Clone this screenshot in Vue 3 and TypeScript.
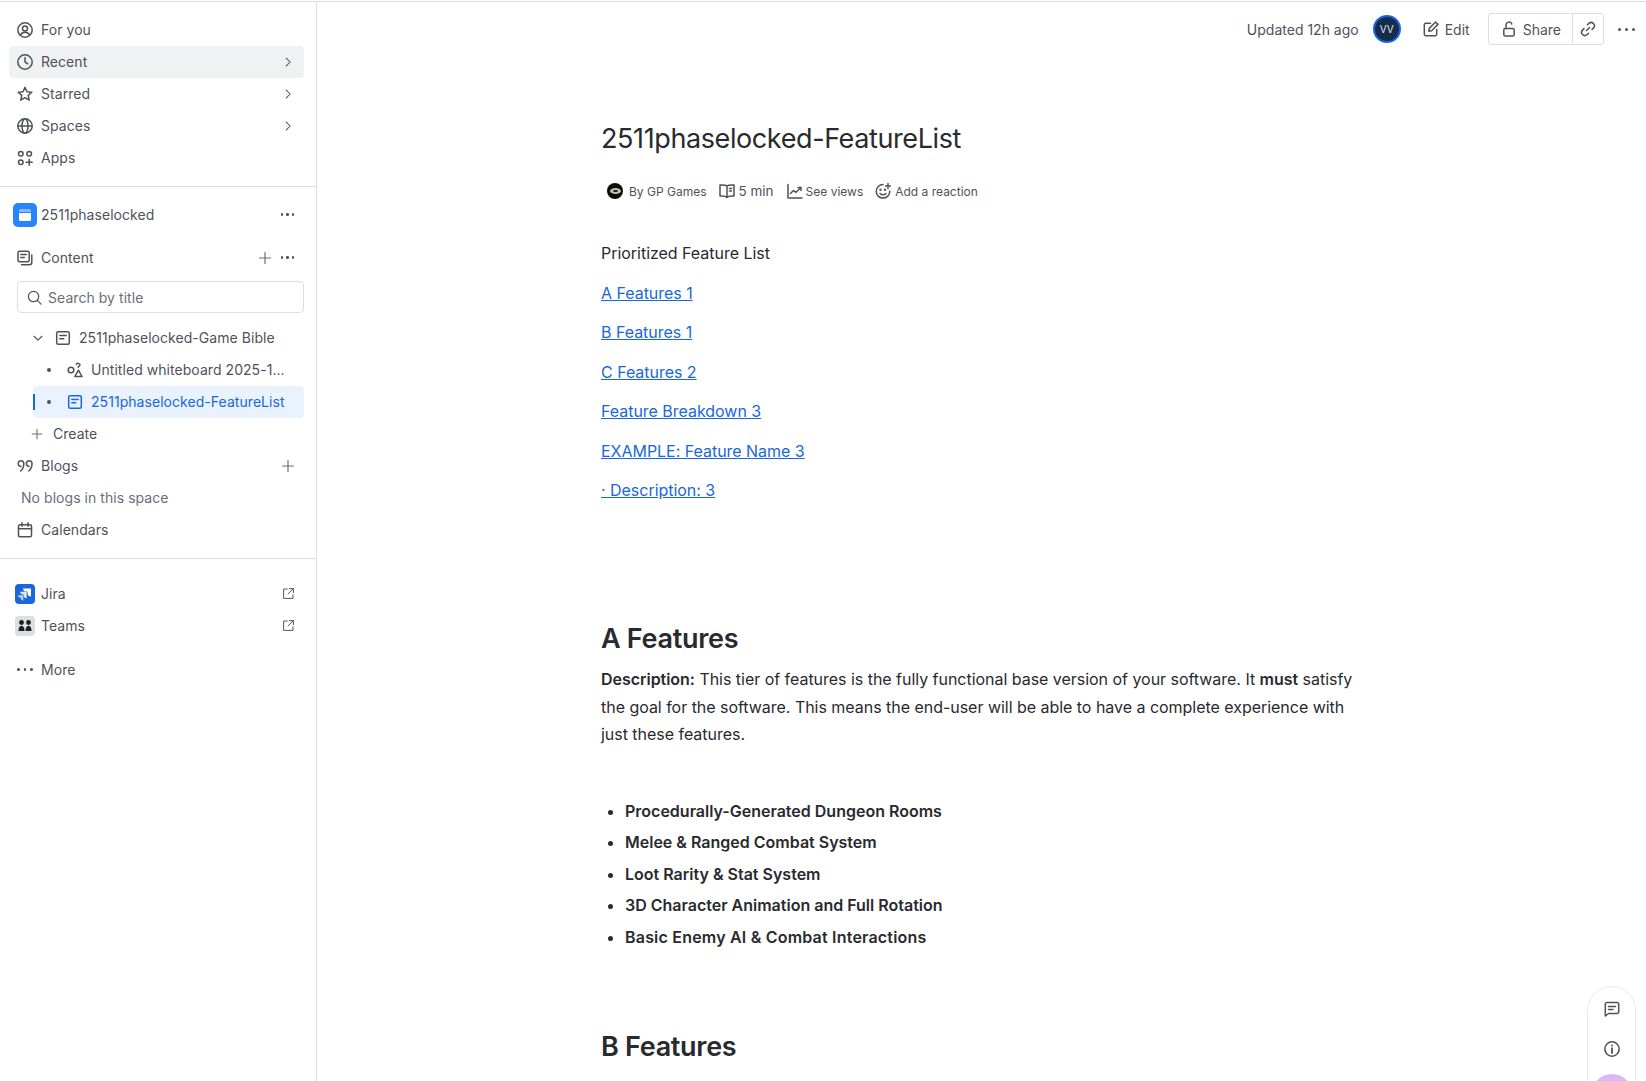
<script setup lang="ts">
const links = [
  "A Features 1",
  "B Features 1",
  "C Features 2",
  "Feature Breakdown 3",
  "EXAMPLE: Feature Name 3",
  "· Description: 3",
];

const features = [
  "Procedurally-Generated Dungeon Rooms",
  "Melee & Ranged Combat System",
  "Loot Rarity & Stat System",
  "3D Character Animation and Full Rotation",
  "Basic Enemy AI & Combat Interactions",
];
</script>

<template>
  <div class="page">
    <aside class="sidebar">
      <nav class="section top-nav">
        <a class="row">
          <svg class="ico" viewBox="0 0 16 16"><circle cx="8" cy="8" r="7.2" /><circle cx="8" cy="6.4" r="2.5" /><path d="M3.4 13.2c.8-2 2.5-3 4.6-3s3.800 1 4.600 3" /></svg>
          <span>For you</span>
        </a>
        <a class="row hovered">
          <svg class="ico" viewBox="0 0 16 16"><circle cx="8" cy="8" r="7.2" /><path d="M8 3.800V8l2.800 1.800" /></svg>
          <span>Recent</span>
          <svg class="chev" viewBox="0 0 16 16"><path d="M6 3.500 10.500 8 6 12.500" /></svg>
        </a>
        <a class="row">
          <svg class="ico" viewBox="0 0 16 16"><path d="M8 1.300 10 5.700l4.800.5-3.600 3.200 1 4.700L8 11.700l-4.200 2.400 1-4.700-3.600-3.200 4.800-.5z" /></svg>
          <span>Starred</span>
          <svg class="chev" viewBox="0 0 16 16"><path d="M6 3.500 10.500 8 6 12.500" /></svg>
        </a>
        <a class="row">
          <svg class="ico" viewBox="0 0 16 16"><circle cx="8" cy="8" r="7.200" /><ellipse cx="8" cy="8" rx="3" ry="7.200" /><path d="M1 8h14" /></svg>
          <span>Spaces</span>
          <svg class="chev" viewBox="0 0 16 16"><path d="M6 3.500 10.500 8 6 12.500" /></svg>
        </a>
        <a class="row">
          <svg class="ico" viewBox="0 0 16 16"><circle cx="3.800" cy="3.800" r="2.300" /><circle cx="12.200" cy="3.800" r="2.300" /><circle cx="3.800" cy="12.200" r="2.300" /><path d="M12.200 9.200v6M9.200 12.200h6" /></svg>
          <span>Apps</span>
        </a>
      </nav>

      <div class="section space-nav">
        <a class="row space-row">
          <span class="space-logo">
            <svg viewBox="0 0 24 24"><path d="M6 7.500A1.500 1.500 0 0 1 7.500 6h9A1.500 1.500 0 0 1 18 7.500V9H6z" fill="#fff" opacity=".45" /><path d="M6 10h12v6.500a1.500 1.500 0 0 1-1.500 1.500h-9A1.500 1.500 0 0 1 6 16.500z" fill="#fff" /></svg>
          </span>
          <span>2511phaselocked</span>
          <span class="dots small"><i /><i /><i /></span>
        </a>

        <a class="row content-row">
          <svg class="ico" viewBox="0 0 16 16"><rect x="1" y="1.200" width="11.200" height="10.600" rx="1.500" /><path d="M3.800 4.500h5.600M3.800 7.500h3.500M14.800 5v7.300a2.500 2.500 0 0 1-2.500 2.500H4.500" /></svg>
          <span>Content</span>
          <svg class="plus right-gap" viewBox="0 0 16 16"><path d="M8 2.500v11M2.500 8h11" /></svg>
          <span class="dots small no-auto"><i /><i /><i /></span>
        </a>

        <div class="search">
          <svg class="search-ico" viewBox="0 0 16 16"><circle cx="7" cy="7" r="5.500" /><path d="m11 11 4 4" /></svg>
          <span>Search by title</span>
        </div>

        <a class="row tree-root">
          <svg class="chev-down" viewBox="0 0 16 16"><path d="M3.500 6 8 10.500 12.500 6" /></svg>
          <svg class="ico page-ico" viewBox="0 0 16 16"><rect x="1.700" y="1.700" width="12.600" height="12.600" rx="1.500" /><path d="M4.800 5.600h6.400M4.800 8.800h4" /></svg>
          <span>2511phaselocked-Game Bible</span>
        </a>
        <a class="row tree-child">
          <span class="bullet" />
          <svg class="ico page-ico" viewBox="0 0 16 16"><circle cx="4" cy="8" r="2.800" /><path d="M9.500 2.200c.4-1.200 3.500-1.200 3.500.6 0 1.200-1.800 1.500-1.800 2.500M11.400 8.200l3.600 6.300H7.800z" /></svg>
          <span class="ellipsis">Untitled whiteboard 2025-1...</span>
        </a>
        <a class="row tree-child selected">
          <span class="marker" />
          <span class="bullet" />
          <svg class="ico page-ico" viewBox="0 0 16 16"><rect x="1.700" y="1.700" width="12.600" height="12.600" rx="1.500" /><path d="M4.800 5.600h6.400M4.800 8.800h4" /></svg>
          <span>2511phaselocked-FeatureList</span>
        </a>
        <a class="row create-row">
          <svg class="plus" viewBox="0 0 16 16"><path d="M8 2.500v11M2.500 8h11" /></svg>
          <span>Create</span>
        </a>

        <a class="row">
          <svg class="ico" viewBox="0 0 16 16"><path d="M4 8.400a2.800 2.800 0 1 1 2.800-2.800c0 3.200-.8 5.600-3.200 7.400M12.200 8.400A2.800 2.800 0 1 1 15 5.600c0 3.200-.8 5.600-3.200 7.400" /></svg>
          <span>Blogs</span>
          <svg class="plus" viewBox="0 0 16 16"><path d="M8 2.500v11M2.500 8h11" /></svg>
        </a>
        <div class="row no-blogs">No blogs in this space</div>
        <a class="row">
          <svg class="ico" viewBox="0 0 16 16"><rect x="1.500" y="2.800" width="13" height="12" rx="1.500" /><path d="M1.500 6.800h13M5 .8v3.500M11 .8v3.500" /></svg>
          <span>Calendars</span>
        </a>
      </div>

      <div class="section app-nav">
        <a class="row">
          <span class="app-logo jira">
            <svg viewBox="0 0 20 20"><path d="M8 4.500h8v8c-2.200 0-3.400-1.200-3.500-3.300V7.500h-1.700C9.300 7.500 8.200 6.300 8 4.500z" fill="#fff" /><path d="M5.200 7.800h6.500v6.500c-1.800 0-2.900-1.100-3-2.900v-.9H7.800c-1.500 0-2.500-1-2.600-2.700z" fill="#fff" opacity=".85" /><path d="M3 11.200h5.300v5.300c-1.600-.1-2.500-1-2.600-2.500v-.4H5.400C4 13.600 3.100 12.700 3 11.200z" fill="#fff" opacity=".7" /></svg>
          </span>
          <span>Jira</span>
          <svg class="ext" viewBox="0 0 16 16"><path d="M6.500 2.500H2v11.500h11.500V9.500M9 2h5v5M14 2 7.500 8.500" /></svg>
        </a>
        <a class="row">
          <span class="app-logo teams">
            <svg viewBox="0 0 20 20" fill="#1e1f21"><circle cx="6.500" cy="6.500" r="2.400" /><circle cx="13.500" cy="6.500" r="2.400" /><path d="M3.500 15c0-3 1-5.200 3-5.200s3 2.200 3 5.200zM10.500 15c0-3 1-5.200 3-5.200s3 2.200 3 5.200z" /></svg>
          </span>
          <span>Teams</span>
          <svg class="ext" viewBox="0 0 16 16"><path d="M6.500 2.500H2v11.500h11.500V9.500M9 2h5v5M14 2 7.500 8.500" /></svg>
        </a>
        <a class="row more-row">
          <span class="dots wide"><i /><i /><i /></span>
          <span>More</span>
        </a>
      </div>
    </aside>

    <main class="main">
      <header class="topbar">
        <span class="updated">Updated 12h ago</span>
        <span class="avatar">VV</span>
        <a class="edit">
          <svg class="ico" viewBox="0 0 16 16"><path d="M7.500 2.300H2.800A1.500 1.500 0 0 0 1.300 3.800v9.400a1.500 1.500 0 0 0 1.500 1.500h9.400a1.500 1.500 0 0 0 1.500-1.500V8.500" /><path d="m5.800 10.200.5-2.800L12.600 1l2.400 2.400-6.400 6.300z" /></svg>
          <span>Edit</span>
        </a>
        <div class="share-group">
          <a class="share">
            <svg class="ico" viewBox="0 0 16 16"><rect x="2.800" y="7.500" width="10.400" height="7.500" rx="1.500" /><path d="M5 7.500V4a3 3 0 0 1 5.800-1" /></svg>
            <span>Share</span>
          </a>
          <a class="link-btn">
            <svg class="ico" viewBox="0 0 16 16"><path d="m6.500 9.500 3-3M7.500 3.800l1.300-1.300a3.200 3.200 0 0 1 4.600 4.600l-1.400 1.400M8.500 12.200l-1.300 1.300a3.200 3.200 0 0 1-4.600-4.600L4 7.500" /></svg>
          </a>
        </div>
        <span class="dots top-dots"><i /><i /><i /></span>
      </header>

      <article class="article">
        <h1>2511phaselocked-FeatureList</h1>

        <div class="byline">
          <span class="author-logo"><i /></span>
          <span class="by">By GP Games</span>
          <svg class="ico meta-ico book" viewBox="0 0 16 16"><path d="M8 3v11.500M8 3C7 2 5 1.800 1 2v11c4-.2 6 0 7 1.500 1-1.500 3-1.700 7-1.500V2c-4-.2-6 0-7 1z" /><path d="M10.500 5.500h2M10.500 8h2" /></svg>
          <span class="mins">5 min</span>
          <svg class="ico meta-ico views" viewBox="0 0 16 16"><path d="M1 1.500v13.500h14" /><path d="m3.500 10.500 3-3 2.500 1.800L14 4.500M11 4.500h3v3" /></svg>
          <span class="see">See views</span>
          <svg class="ico meta-ico react" viewBox="0 0 16 16"><path d="M8 1.500a6.800 6.800 0 1 0 6.800 6.800" /><path d="M5 10.500c1.500 1.800 4.500 1.800 6 0" /><circle cx="5.500" cy="6.800" r=".5" /><circle cx="10" cy="6.800" r=".5" /><path d="M13 .5v5M10.500 3h5" /></svg>
          <span>Add a reaction</span>
        </div>

        <p class="intro">Prioritized Feature List</p>
        <p v-for="item in links" :key="item" class="toc"><a>{{ item }}</a></p>

        <h2 class="first-heading">A Features</h2>
        <p class="desc"><strong>Description:</strong> This tier of features is the fully functional base version of your software. It <strong>must</strong> satisfy the goal for the software. This means the end-user will be able to have a complete experience with just these features.</p>
        <ul>
          <li v-for="item in features" :key="item">{{ item }}</li>
        </ul>

        <h2 class="second-heading">B Features</h2>
      </article>

      <div class="side-pill">
        <svg class="ico" viewBox="0 0 16 16"><path d="M2.800 1.500h10.400a1.500 1.500 0 0 1 1.500 1.500v8a1.500 1.500 0 0 1-1.500 1.500H4.500L1.300 15V3a1.500 1.500 0 0 1 1.500-1.500z" /><path d="M4.500 5.500h7M4.500 8.500h4.500" /></svg>
        <svg class="ico" viewBox="0 0 16 16"><circle cx="8" cy="8" r="7.200" /><path d="M8 7.200V12" stroke-width="1.800" /><circle cx="8" cy="4.500" r=".4" stroke-width="1.100" /></svg>
        <span class="pill-line" />
        <span class="pill-circle" />
      </div>
    </main>
  </div>
</template>

<style>
html,
body {
  margin: 0;
  height: 100%;
  overflow: hidden;
  background: #fff;
}
</style>

<style scoped>
.page {
  display: flex;
  height: 1080px;
  margin-top: 1px;
  overflow: hidden;
  box-sizing: border-box;
  border-top: 1px solid #dddee1;
  font-family: Inter, "Liberation Sans", sans-serif;
  color: #292a2e;
  font-size: 14px;
}

.sidebar {
  width: 317px;
  flex: none;
  box-sizing: border-box;
  border-right: 1px solid #dddee1;
  display: flex;
  flex-direction: column;
  color: #505258;
  letter-spacing: 0.05px;
}

.section {
  padding: 0 12px 0 9px;
  border-bottom: 1px solid #dddee1;
}

.top-nav {
  padding-top: 12px;
  padding-bottom: 12px;
}

.space-nav {
  padding-top: 11px;
  padding-bottom: 12px;
}

.app-nav {
  padding-top: 19px;
  border-bottom: none;
}

.row {
  display: flex;
  align-items: center;
  box-sizing: border-box;
  height: 32px;
  padding: 0 8px 1px;
  border-radius: 4px;
  position: relative;
  font-weight: 400;
  white-space: nowrap;
}

.hovered {
  background: #f0f1f2;
}

.ico {
  width: 16px;
  height: 16px;
  flex: none;
  fill: none;
  stroke: #505258;
  stroke-width: 1.500;
  stroke-linecap: round;
  stroke-linejoin: round;
}

.row > .ico {
  margin-right: 8px;
}

.chev,
.plus,
.ext {
  width: 16px;
  height: 16px;
  flex: none;
  fill: none;
  stroke: #6b6e76;
  stroke-width: 1.200;
  stroke-linecap: round;
  stroke-linejoin: round;
  margin-left: auto;
}

.ext {
  width: 13px;
  height: 13px;
  margin-right: 1.500px;
  stroke: #505258;
}

.chev {
  width: 14px;
  height: 14px;
  margin-right: 1px;
  stroke: #505258;
}

.dots {
  display: inline-flex;
  gap: 3px;
  margin-left: auto;
  margin-right: 2px;
}

.dots.no-auto {
  margin-left: 0;
}

.dots i {
  width: 2.500px;
  height: 2.500px;
  border-radius: 50%;
  background: #505258;
}

.dots.wide {
  gap: 4px;
  margin: 0 8px 0 0;
  width: 16px;
}

.dots.wide i {
  width: 3px;
  height: 3px;
}

.space-row {
  height: 34px;
  margin-bottom: 10px;
}

.space-logo {
  width: 24px;
  height: 24px;
  margin: 0 4px 0 -4px;
  border-radius: 5px;
  background: #2684ff;
  flex: none;
}

.space-logo svg {
  display: block;
  width: 24px;
  height: 24px;
}

.content-row {
  height: 32px;
  margin-bottom: 7px;
}

.right-gap {
  margin-right: 8px;
}

.search {
  display: flex;
  align-items: center;
  gap: 6px;
  height: 32px;
  box-sizing: border-box;
  margin: 0 0 9px 8px;
  padding: 0 9px;
  border: 1px solid #dddee1;
  border-radius: 4px;
  color: #6b6e76;
}

.search-ico {
  width: 15px;
  height: 15px;
  fill: none;
  stroke: #505258;
  stroke-width: 1.300;
  stroke-linecap: round;
}

.tree-root {
  padding-left: 22px;
}

.chev-down {
  width: 14px;
  height: 14px;
  flex: none;
  margin-right: 10px;
  fill: none;
  stroke: #505258;
  stroke-width: 1.300;
  stroke-linecap: round;
  stroke-linejoin: round;
}

.tree-root > .page-ico {
  margin-right: 8px;
}

.tree-child {
  padding-left: 37px;
  margin-left: 24px;
  padding-right: 4px;
}

.tree-child > .page-ico {
  margin-left: 1px;
  margin-right: 8px;
}

.bullet {
  width: 4px;
  height: 4px;
  border-radius: 50%;
  background: #505258;
  margin-left: -23px;
  margin-right: 15px;
  flex: none;
}

.selected {
  background: #e9f2fe;
  color: #1868db;
}

.selected .ico {
  stroke: #1868db;
}

.marker {
  position: absolute;
  left: 0;
  top: 8px;
  bottom: 8px;
  width: 2px;
  background: #1868db;
}

.create-row {
  padding-left: 21px;
}

.create-row .plus {
  margin: 0 9px 0 0;
  width: 14px;
  height: 14px;
}

.no-blogs {
  padding-left: 12px;
  color: #6b6e76;
}

.app-logo {
  width: 20px;
  height: 20px;
  flex: none;
  margin: 0 6px 0 -2px;
  border-radius: 4px;
}

.app-logo svg {
  display: block;
  width: 20px;
  height: 20px;
}

.jira {
  background: #1868db;
}

.teams {
  background: #dddee1;
}

.more-row {
  margin-top: 12px;
}

.main {
  flex: 1;
  min-width: 0;
  position: relative;
}

.topbar {
  display: flex;
  align-items: center;
  justify-content: flex-end;
  height: 32px;
  margin-top: 11px;
  padding-right: 11px;
  color: #505258;
}

.updated {
  margin-right: 14px;
}

.avatar {
  width: 28px;
  height: 28px;
  box-sizing: border-box;
  border-radius: 50%;
  background: #172b4d;
  border: 2px solid #1868db;
  color: #dfe1e6;
  font-size: 10px;
  display: flex;
  align-items: center;
  justify-content: center;
  margin-right: 22px;
}

.edit {
  display: flex;
  align-items: center;
  gap: 6px;
  margin-right: 18px;
}

.share-group {
  display: flex;
  height: 32px;
  box-sizing: border-box;
  border: 1px solid #dddee1;
  border-radius: 3px;
  margin-right: 14px;
}

.share {
  display: flex;
  align-items: center;
  gap: 6px;
  padding: 0 11px 0 12px;
  border-right: 1px solid #dddee1;
}

.link-btn {
  display: flex;
  align-items: center;
  justify-content: center;
  width: 30px;
}

.top-dots {
  margin: 0;
  gap: 4px;
}

.top-dots i {
  width: 3px;
  height: 3px;
}

.article {
  width: 760px;
  margin-left: 284px;
}

h1 {
  margin: 76px 0 0;
  font-size: 27px;
  line-height: 36px;
  font-weight: 400;
  letter-spacing: -0.4px;
  color: #292a2e;
}

.byline {
  display: flex;
  align-items: center;
  height: 20px;
  margin-top: 24px;
  padding-left: 6px;
  font-size: 12px;
  color: #505258;
}

.author-logo {
  width: 16px;
  height: 16px;
  border-radius: 50%;
  background: #0b0b0b;
  display: flex;
  align-items: center;
  justify-content: center;
  margin-right: 6px;
}

.author-logo i {
  width: 11px;
  height: 6px;
  border-radius: 50%;
  background: radial-gradient(#222 25%, #c8c2a0 32%);
}

.by {
  margin-right: 12px;
}

.meta-ico {
  margin-right: 4px;
}

.views {
  margin-right: 3px;
}

.mins {
  font-size: 13.500px;
  margin-right: 13px;
}

.see {
  margin-right: 12px;
}

p {
  margin: 0;
  font-size: 16px;
  letter-spacing: -0.03px;
}

.intro {
  margin-top: 40px;
  line-height: 24px;
}

.toc {
  margin-top: 15.500px;
  line-height: 24px;
}

.toc a {
  color: #1868db;
  text-decoration: underline;
}

h2 {
  margin: 0;
  font-size: 27px;
  line-height: 36px;
  font-weight: 600;
  letter-spacing: -0.3px;
}

.first-heading {
  margin-top: 119px;
}

.desc {
  margin-top: 9px;
  line-height: 27.500px;
}

strong {
  font-weight: 600;
}

ul {
  margin: 47px 0 0;
  padding-left: 24px;
  font-size: 16px;
  font-weight: 600;
}

li {
  line-height: 31.500px;
}

li:last-child {
  letter-spacing: 0.2px;
}

.second-heading {
  margin-top: 76px;
}

.side-pill {
  position: absolute;
  right: 10px;
  top: 984px;
  width: 49px;
  height: 130px;
  box-sizing: border-box;
  border: 1px solid #e8e9eb;
  border-radius: 25px;
  display: flex;
  flex-direction: column;
  align-items: center;
  padding-top: 14px;
  gap: 24px;
  background: #fff;
}

.pill-line {
  width: 16px;
  height: 2px;
  background: #dddee1;
  margin-top: -9px;
}

.pill-circle {
  width: 42px;
  height: 42px;
  margin-top: -22px;
  flex: none;
  border-radius: 50%;
  background: #dcb8f2;
}
</style>
